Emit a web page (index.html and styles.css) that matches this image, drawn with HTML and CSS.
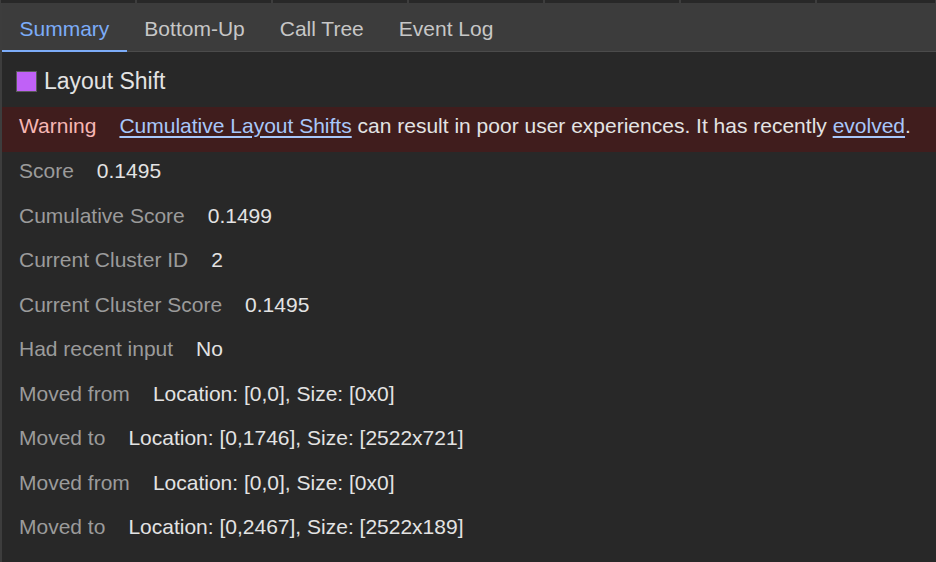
FILE: index.html
```html
<!DOCTYPE html>
<html lang="en">
<head>
<meta charset="utf-8">
<title>Layout Shift Summary</title>
<link rel="stylesheet" href="styles.css">
</head>
<body>
<div class="panel">
  <div class="strip"></div>
  <nav class="tabs">
    <div class="tab active">Summary</div>
    <div class="tab">Bottom-Up</div>
    <div class="tab">Call Tree</div>
    <div class="tab">Event Log</div>
  </nav>
  <div class="title"><span class="swatch"></span><span>Layout Shift</span></div>
  <div class="warning">
    <span class="warn-label">Warning</span>
    <span class="warn-text"><a href="#" class="link">Cumulative Layout Shifts</a> can result in poor user experiences. It has recently <a href="#" class="link">evolved</a>.</span>
  </div>
  <div class="rows">
    <div class="row"><span class="label">Score</span><span class="value">0.1495</span></div>
    <div class="row"><span class="label">Cumulative Score</span><span class="value">0.1499</span></div>
    <div class="row"><span class="label">Current Cluster ID</span><span class="value">2</span></div>
    <div class="row"><span class="label">Current Cluster Score</span><span class="value">0.1495</span></div>
    <div class="row"><span class="label">Had recent input</span><span class="value">No</span></div>
    <div class="row"><span class="label">Moved from</span><span class="value">Location: [0,0], Size: [0x0]</span></div>
    <div class="row"><span class="label">Moved to</span><span class="value">Location: [0,1746], Size: [2522x721]</span></div>
    <div class="row"><span class="label">Moved from</span><span class="value">Location: [0,0], Size: [0x0]</span></div>
    <div class="row"><span class="label">Moved to</span><span class="value">Location: [0,2467], Size: [2522x189]</span></div>
  </div>
</div>
</body>
</html>
```

FILE: styles.css
```css
html, body {
  margin: 0;
  padding: 0;
  background: #282828;
  height: 100%;
  overflow: hidden;
}
body {
  font-family: "Liberation Sans", Arial, Helvetica, sans-serif;
  font-size: 21px;
  line-height: 24px;
  color: #e3e3e3;
}
.panel {
  min-height: 562px;
  border-left: 2px solid #3d3d3d;
  box-sizing: border-box;
}
.strip {
  height: 3px;
  margin-left: -2px;
  background: repeating-linear-gradient(to right, #3d3d3d 0, #3d3d3d 2px, #282828 2px, #282828 136px);
  background-position: -1px 0;
}
.tabs {
  display: flex;
  height: 49px;
  background: #3c3c3c;
  box-shadow: inset 0 -1px 0 #4b4b4b;
}
.tab {
  padding: 14px 17.5px 0;
  box-sizing: border-box;
  height: 49px;
  color: #c7c7c7;
  border-bottom: 2px solid transparent;
}
.tab.active {
  color: #7cacf8;
  border-bottom-color: #7cacf8;
}
.title {
  display: flex;
  align-items: center;
  gap: 7px;
  padding: 16px 0 13px 14px;
  font-size: 23px;
  line-height: 26px;
  color: #e3e3e3;
}
.swatch {
  width: 19px;
  height: 19px;
  background: #c061f7;
  border: 1px solid #5a5a5a;
  flex: none;
}
.warning {
  display: flex;
  gap: 23px;
  background: #401d1d;
  padding: 7px 17px 14px;
  white-space: nowrap;
}
.warn-label {
  color: #f6b6b4;
}
.warn-text {
  color: #e3e3e3;
}
.link {
  color: #a8c7fa;
  text-decoration: underline;
  text-underline-offset: 3px;
}
.rows {
  display: flex;
  flex-direction: column;
  gap: 20.5px;
  padding: 7px 17px 0;
}
.row {
  display: flex;
  gap: 23px;
  white-space: nowrap;
}
.label {
  color: #9b9b9b;
}
.value {
  color: #e3e3e3;
}
```
